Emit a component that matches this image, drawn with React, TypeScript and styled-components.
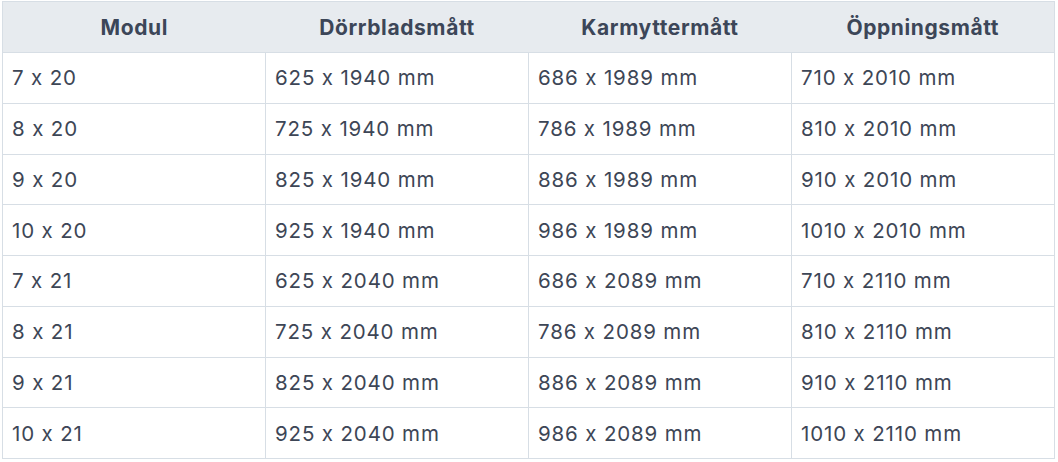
import styled, { createGlobalStyle } from "styled-components";

const rows = [
  ["7 x 20", "625 x 1940 mm", "686 x 1989 mm", "710 x 2010 mm"],
  ["8 x 20", "725 x 1940 mm", "786 x 1989 mm", "810 x 2010 mm"],
  ["9 x 20", "825 x 1940 mm", "886 x 1989 mm", "910 x 2010 mm"],
  ["10 x 20", "925 x 1940 mm", "986 x 1989 mm", "1010 x 2010 mm"],
  ["7 x 21", "625 x 2040 mm", "686 x 2089 mm", "710 x 2110 mm"],
  ["8 x 21", "725 x 2040 mm", "786 x 2089 mm", "810 x 2110 mm"],
  ["9 x 21", "825 x 2040 mm", "886 x 2089 mm", "910 x 2110 mm"],
  ["10 x 21", "925 x 2040 mm", "986 x 2089 mm", "1010 x 2110 mm"],
];

const headers = ["Modul", "Dörrbladsmått", "Karmyttermått", "Öppningsmått"];

export default function App() {
  return (
    <>
      <GlobalStyle />
      <Wrapper>
        <Table>
          <thead>
            <tr>
              {headers.map((h) => (
                <HeadCell key={h}>{h}</HeadCell>
              ))}
            </tr>
          </thead>
          <tbody>
            {rows.map((row) => (
              <tr key={row[0]}>
                {row.map((cell, i) => (
                  <Cell key={i}>{cell}</Cell>
                ))}
              </tr>
            ))}
          </tbody>
        </Table>
      </Wrapper>
    </>
  );
}

const GlobalStyle = createGlobalStyle`
  body {
    margin: 0;
    background: #ffffff;
    font-family: Inter, "Noto Sans", sans-serif;
    font-feature-settings: "calt" 0;
  }
`;

const Wrapper = styled.div`
  padding: 1px 3px 0 2px;
`;

const Table = styled.table`
  width: 1053px;
  border-collapse: collapse;
  table-layout: fixed;
  border: 1px solid #d7dee5;
`;

const HeadCell = styled.th`
  height: 50px;
  padding: 0 10px;
  background: #e7ebef;
  color: #3c4658;
  font-size: 21px;
  font-weight: 700;
  letter-spacing: 0.6px;
  text-align: center;
  border-bottom: 1px solid #d7dee5;
`;

const Cell = styled.td`
  height: 49.75px;
  padding: 0 9px;
  color: #3d4656;
  font-size: 20.5px;
  font-weight: 400;
  letter-spacing: 0.85px;
  text-align: left;
  border: 1px solid #d7dee5;
`;
